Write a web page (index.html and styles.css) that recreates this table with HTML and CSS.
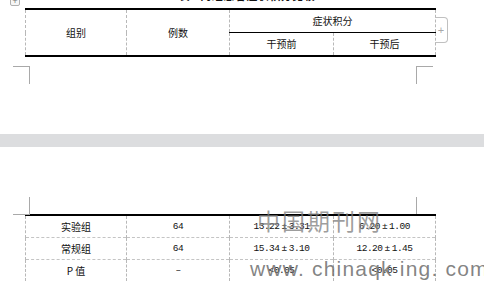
FILE: index.html
```html
<!DOCTYPE html>
<html lang="zh">
<head>
<meta charset="utf-8">
<link rel="stylesheet" href="styles.css">
</head>
<body>
<div class="page page-one">
  <div class="handle"><span class="handle-cross">+</span></div>
  <div class="title"><span>表1 两组患者症状积分比较</span></div>
  <table class="grid grid-head">
    <colgroup><col class="c1"><col class="c2"><col class="c3"><col class="c4"></colgroup>
    <tr class="hr1">
      <td rowspan="2">组别</td>
      <td rowspan="2">例数</td>
      <td colspan="2" class="span-top">症状积分</td>
    </tr>
    <tr class="hr2">
      <td class="sub">干预前</td>
      <td class="sub">干预后</td>
    </tr>
  </table>
  <div class="addcol">+</div>
  <div class="mark mark-bl"></div>
  <div class="mark mark-br"></div>
</div>
<div class="gap"></div>
<div class="page page-two">
  <div class="mark mark-tl"></div>
  <div class="mark mark-tr"></div>
  <table class="grid grid-body">
    <colgroup><col class="c1"><col class="c2"><col class="c3"><col class="c4"></colgroup>
    <tr>
      <td>实验组</td>
      <td class="num">64</td>
      <td class="num">13.22<span class="pm">±</span>3.31</td>
      <td class="num">6.20<span class="pm">±</span>1.00</td>
    </tr>
    <tr>
      <td>常规组</td>
      <td class="num">64</td>
      <td class="num">15.34<span class="pm">±</span>3.10</td>
      <td class="num">12.20<span class="pm">±</span>1.45</td>
    </tr>
    <tr>
      <td>P 值</td>
      <td class="num">–</td>
      <td class="num">&lt;0.05</td>
      <td class="num">&lt;0.05</td>
    </tr>
  </table>
  <div class="wm wm-cn">中国期刊网</div>
  <div class="wm wm-en">www. chinaqk ing. com</div>
</div>
</body>
</html>
```

FILE: styles.css
```css
html, body {
  margin: 0;
  padding: 0;
}
body {
  width: 484px;
  height: 281px;
  overflow: hidden;
  background: #ffffff;
  font-family: "Noto Sans CJK SC", "Liberation Sans", sans-serif;
  font-size: 10px;
  color: #111;
}
.page {
  position: relative;
  background: #fff;
}
.page-one {
  height: 134px;
}
.gap {
  height: 13px;
  background: #dcdddf;
}
.page-two {
  height: 134px;
  padding-top: 67px;
  box-sizing: border-box;
}
.title {
  height: 8px;
  overflow: hidden;
  display: flex;
  justify-content: center;
  align-items: flex-end;
  padding-left: 10px;
}
.title span {
  font-size: 11px;
  line-height: 11px;
  margin-bottom: 7px;
  font-weight: 700;
  letter-spacing: 0.5px;
}
.grid {
  margin-left: 25px;
  width: 410px;
  border-collapse: collapse;
  table-layout: fixed;
  border-top: 2px solid #000;
  border-bottom: 2px solid #000;
}
.c1 { width: 101px; }
.c2 { width: 103px; }
.c3 { width: 104px; }
.c4 { width: 102px; }
.grid td {
  border-left: 1px dashed #b8b8b8;
  border-right: 1px dashed #b8b8b8;
  text-align: center;
  vertical-align: middle;
  padding: 0;
  line-height: 12px;
  white-space: nowrap;
}
.hr1 td { height: 22px; }
.hr2 td { height: 22px; }
.grid-head td.sub {
  border-top: 1px solid #000;
}
.grid-body td {
  height: 21px;
  border-top: 1px dashed #c4c4c4;
}
.grid-body tr:first-child td {
  border-top: 2px solid #000;
}
.num {
  font-family: "Liberation Mono", monospace;
  font-size: 9.5px;
  letter-spacing: -0.5px;
}
.pm {
  margin: 0 2px;
}
.handle {
  position: absolute;
  left: 10px;
  top: -5px;
  width: 8px;
  height: 9px;
  border: 1px solid #b0b0b0;
  border-radius: 2px;
  background: #f6f6f6;
  font-size: 9px;
  line-height: 9px;
  text-align: center;
  color: #777;
}
.addcol {
  position: absolute;
  left: 435px;
  top: 17px;
  width: 12px;
  height: 24px;
  border: 1px solid #c0c0c0;
  border-left: none;
  border-radius: 0 4px 4px 0;
  color: #a8a8a8;
  font-family: "Liberation Sans", sans-serif;
  font-size: 11px;
  line-height: 24px;
  text-align: center;
}
.mark {
  position: absolute;
  width: 16px;
  height: 17px;
  border-color: #a9a9a9;
  border-style: solid;
  border-width: 0;
}
.mark-bl {
  left: 13px;
  top: 66px;
  border-top-width: 1px;
  border-right-width: 1px;
}
.mark-br {
  left: 416px;
  top: 66px;
  border-top-width: 1px;
  border-left-width: 1px;
}
.mark-tl {
  left: 13px;
  top: 50px;
  border-bottom-width: 1px;
  border-right-width: 1px;
}
.mark-tr {
  left: 416px;
  top: 50px;
  border-left-width: 1px;
}
.wm {
  position: absolute;
  white-space: nowrap;
}
.wm-cn {
  left: 257px;
  top: 60px;
  font-family: "Noto Sans CJK SC", sans-serif;
  font-size: 23px;
  line-height: 26px;
  letter-spacing: 2px;
  color: rgba(125, 125, 125, 0.75);
}
.wm-en {
  left: 250px;
  top: 111px;
  font-family: "Liberation Sans", sans-serif;
  font-size: 21px;
  line-height: 21px;
  letter-spacing: 1.2px;
  color: rgba(110, 110, 110, 0.85);
}
```
